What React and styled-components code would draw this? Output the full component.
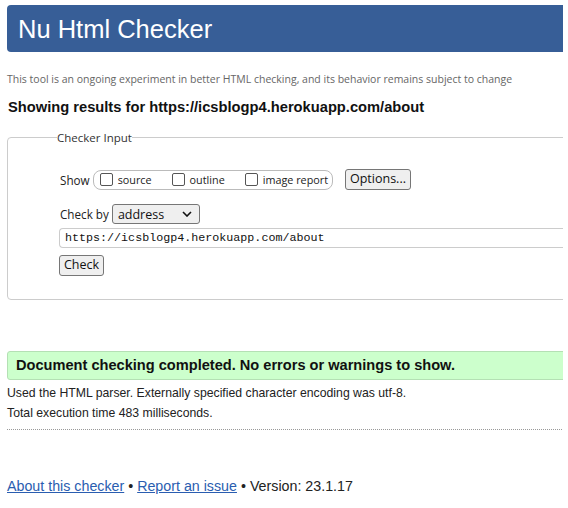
import React from "react";
import styled, { createGlobalStyle } from "styled-components";

const Global = createGlobalStyle`
  body {
    margin: 0;
    background: #fff;
    font-family: "Liberation Sans", Arial, sans-serif;
  }
`;

const Page = styled.div`
  width: 563px;
  height: 508px;
  overflow: hidden;
  padding-left: 7px;
  box-sizing: border-box;
  padding-top: 5px;
`;

const Wide = styled.div`
  width: 620px;
`;

const Header = styled.h1`
  margin: 0;
  height: 47px;
  background: #375e97;
  border-radius: 4px;
  color: #fff;
  font-weight: normal;
  font-size: 25.5px;
  line-height: 48px;
  padding-left: 11px;
`;

const Intro = styled.p`
  margin: 20px 0 0;
  font-family: "Open Sans", sans-serif;
  font-size: 10.5px;
  color: #666;
  line-height: 14px;
`;

const Heading = styled.h2`
  margin: 12px 0 0 1px;
  font-size: 14.7px;
  line-height: 18px;
  font-weight: bold;
  color: #111;
`;

const Fieldset = styled.fieldset`
  margin: 14px 0 0;
  padding: 22px 0 23px 52px;
  border: 1px solid #ccc;
  border-radius: 4px;
  font-family: "Open Sans", sans-serif;
`;

const Legend = styled.legend`
  font-size: 11.5px;
  color: #333;
  padding: 0;
  margin-left: -3px;
`;

const Row = styled.div`
  display: flex;
  align-items: center;
  gap: ${(p) => p.gap || 3}px;
  margin-top: ${(p) => p.top || 0}px;
  font-size: 11.7px;
  color: #222;
`;

const Group = styled.div`
  display: flex;
  align-items: center;
  height: 18px;
  padding: 0 4px 0 6px;
  border: 1px solid #bbb;
  border-radius: 8px;
  font-size: 10.8px;
  margin-right: 9px;
`;

const Opt = styled.label`
  display: flex;
  align-items: center;
  gap: 5px;
  margin-right: ${(p) => p.mr || 0}px;
`;

const Box = styled.span`
  width: 11px;
  height: 11px;
  border: 1px solid #555;
  border-radius: 2px;
  background: #fff;
`;

const Button = styled.button`
  font-family: "Open Sans", sans-serif;
  font-size: 12.5px;
  color: #111;
  background: #efefef;
  border: 1px solid #767676;
  border-radius: 3px;
  height: 21px;
  padding: 0 4px;
  line-height: 1;
  margin-left: ${(p) => p.ml || 0}px;
`;

const Select = styled.div`
  display: flex;
  align-items: center;
  justify-content: space-between;
  width: 88px;
  height: 20px;
  box-sizing: border-box;
  border: 1px solid #767676;
  border-radius: 3px;
  background: #efefef;
  padding: 0 7px 0 5px;
  font-size: 12.5px;
  color: #111;
`;

const UrlInput = styled.div`
  margin: 4px 0 0 -1px;
  height: 20px;
  box-sizing: border-box;
  border: 1px solid #ccc;
  border-right: none;
  border-radius: 4px 0 0 4px;
  padding-left: 5px;
  font-family: "Liberation Mono", monospace;
  font-size: 11.7px;
  line-height: 18px;
  color: #111;
`;

const Result = styled.div`
  margin-top: 51px;
  height: 29px;
  box-sizing: border-box;
  background: #ccffcc;
  border: 1px solid #b4e0b4;
  border-radius: 3px;
  padding-left: 8px;
  font-weight: bold;
  font-size: 14.6px;
  line-height: 27px;
  color: #111;
`;

const Note = styled.p`
  margin: ${(p) => p.top || 0}px 0 0;
  font-size: 12.25px;
  line-height: 14px;
  color: #222;
`;

const Rule = styled.hr`
  margin: 9px 0 0;
  border: none;
  border-top: 1px dotted #999;
  width: 555px;
`;

const Footer = styled.p`
  margin: 48px 0 0;
  font-size: 14.25px;
  line-height: 16px;
  color: #222;
  a {
    color: #2a5db0;
  }
`;

const Chevron = () => (
  <svg width="10" height="6" viewBox="0 0 10 6">
    <path d="M1 1l4 4 4-4" fill="none" stroke="#111" strokeWidth="1.6" />
  </svg>
);

export default function App() {
  return (
    <>
      <Global />
      <Page>
        <Wide>
          <Header>Nu Html Checker</Header>
          <Intro>
            This tool is an ongoing experiment in better HTML checking, and its behavior remains subject to change
          </Intro>
          <Heading>Showing results for https://icsblogp4.herokuapp.com/about</Heading>
          <Fieldset>
            <Legend>Checker Input</Legend>
            <Row top={2}>
              <span>Show</span>
              <Group>
                <Opt mr={20}>
                  <Box />
                  source
                </Opt>
                <Opt mr={20}>
                  <Box />
                  outline
                </Opt>
                <Opt>
                  <Box />
                  image report
                </Opt>
              </Group>
              <Button>Options...</Button>
            </Row>
            <Row top={14} gap={3}>
              <span>Check by</span>
              <Select>
                address
                <Chevron />
              </Select>
            </Row>
            <UrlInput>https://icsblogp4.herokuapp.com/about</UrlInput>
            <Row top={7}>
              <Button ml={-1}>Check</Button>
            </Row>
          </Fieldset>
          <Result>Document checking completed. No errors or warnings to show.</Result>
          <Note top={6}>Used the HTML parser. Externally specified character encoding was utf-8.</Note>
          <Note top={6}>Total execution time 483 milliseconds.</Note>
          <Rule />
          <Footer>
            <a href="#about">About this checker</a> • <a href="#report">Report an issue</a> • Version: 23.1.17
          </Footer>
        </Wide>
      </Page>
    </>
  );
}
